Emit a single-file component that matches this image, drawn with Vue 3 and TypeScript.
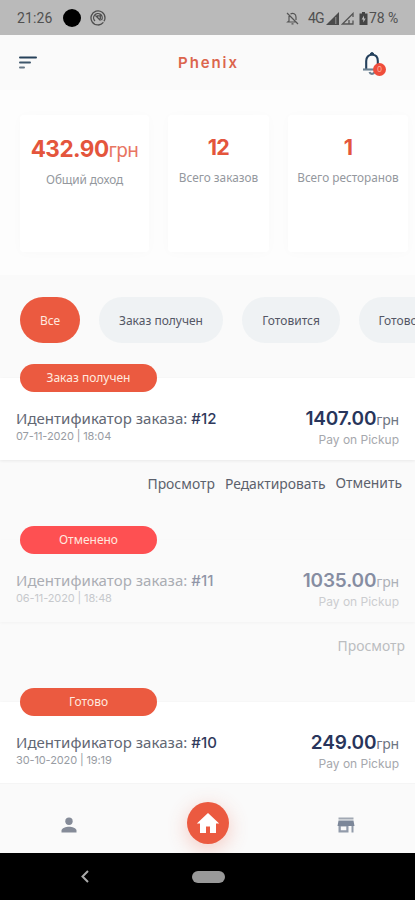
<script setup lang="ts">
interface Stat {
  value: string
  unit: string
  label: string
  size: string
}

interface Order {
  id: string
  date: string
  status: string
  amount: string
  actions: string[]
  cancelled: boolean
}

const stats: Stat[] = [
  { value: '432.90', unit: 'грн', label: 'Общий доход', size: 'wide' },
  { value: '12', unit: '', label: 'Всего заказов', size: 'small' },
  { value: '1', unit: '', label: 'Всего ресторанов', size: 'medium' },
]

const filters: string[] = ['Все', 'Заказ получен', 'Готовится', 'Готово']

const orders: Order[] = [
  { id: '#12', date: '07-11-2020 | 18:04', status: 'Заказ получен', amount: '1407.00', actions: ['Просмотр', 'Редактировать', 'Отменить'], cancelled: false },
  { id: '#11', date: '06-11-2020 | 18:48', status: 'Отменено', amount: '1035.00', actions: ['Просмотр'], cancelled: true },
  { id: '#10', date: '30-10-2020 | 19:19', status: 'Готово', amount: '249.00', actions: [], cancelled: false },
]
</script>

<template>
  <div class="phone">
    <div class="status">
      <span class="clock">21:26</span>
      <span class="dot"></span>
      <svg class="at" width="16" height="16" viewBox="0 0 16 16" fill="none" stroke="#4e4e4e" stroke-width="1.3">
        <path d="M13.4 12.4A7 7 0 1 1 15 8c0 1.500-.3 2.600-1.200 3.300M10.500 14.300A7 7 0 0 1 8 15" />
        <path d="M5 11a4.300 4.300 0 1 1 6.500-.8M5.500 5.500l5 5M7 5.800h3.300v3.400" />
      </svg>
      <span class="grow"></span>
      <svg class="mute" width="13" height="14" viewBox="0 0 13 14" fill="none" stroke="#555" stroke-width="1.200">
        <path d="M1 2l11 11M3 5v5L1.800 11h8M4.500 3C7 1.500 10 3 10 6v3M5.500 12.800h2" />
      </svg>
      <span class="net">4G</span>
      <svg class="sig" width="13" height="13" viewBox="0 0 13 13"><path d="M13 0v13H0z" fill="#4b4b4b" /><path d="M9.800 5v7" stroke="#aaa" stroke-width=".8" /></svg>
      <svg class="sig2" width="13" height="13" viewBox="0 0 13 13" fill="none" stroke="#555" stroke-width="1.300"><path d="M12 8.500V12H1.500L12 1.500V5M8 12V8" /></svg>
      <svg class="batt" width="9" height="13" viewBox="0 0 9 13"><path d="M3 0h3v1.500h2.500V13H.5V1.500H3z" fill="#444" /><path d="M5 3.500L2.600 7.500h1.700v3L6.700 6.500H5z" fill="#bababa" /></svg>
      <span class="pct">78 %</span>
    </div>

    <header class="header">
      <svg class="menu" width="18" height="13" viewBox="0 0 18 13" fill="none" stroke-width="2" stroke-linecap="round">
        <path d="M1 1.500h16" stroke="#26415a" /><path d="M1 6.500h10" stroke="#3e566b" /><path d="M1 11.500h4" stroke="#667786" />
      </svg>
      <h1>Phenix</h1>
      <div class="bell">
        <svg width="22" height="24" viewBox="0 0 22 24" fill="none" stroke="#24405c" stroke-width="2.100">
          <path d="M4.200 18V10C4.200 6.200 6.400 3.800 10 3.800s5.800 2.400 5.800 6.200v8" />
          <path d="M8.300 3.300a1.700 1.700 0 0 1 3.400 0z" fill="#24405c" stroke-width="1" />
          <path d="M1 18.500h17" stroke="#6c8192" /><path d="M7.500 21a2.600 2.600 0 0 0 5 0" stroke="#6c8192" />
        </svg>
        <span class="count">0</span>
      </div>
    </header>

    <section class="stats">
      <div v-for="s in stats" :key="s.label" class="stat" :class="s.size">
        <div class="value">{{ s.value }}<span v-if="s.unit">{{ s.unit }}</span></div>
        <div class="label">{{ s.label }}</div>
      </div>
    </section>

    <nav class="filters">
      <button v-for="(f, i) in filters" :key="f" :class="['pill', 'pill' + i]">{{ f }}</button>
    </nav>

    <main class="orders">
      <article v-for="o in orders" :key="o.id" class="order" :class="{ cancelled: o.cancelled }">
        <div class="badge">{{ o.status }}</div>
        <div class="card">
          <div class="info">
            <div class="title">Идентификатор заказа: <b>{{ o.id }}</b></div>
            <div class="date">{{ o.date }}</div>
          </div>
          <div class="sum">
            <div class="amount">{{ o.amount }}<span>грн</span></div>
            <div class="pay">Pay on Pickup</div>
          </div>
        </div>
        <div class="actions"><a v-for="a in o.actions" :key="a" :class="{ last: a === 'Отменить' }">{{ a }}</a></div>
      </article>
    </main>

    <footer class="tabs">
      <svg class="user" width="16" height="16" viewBox="0 0 16 16" fill="#858b98"><circle cx="8" cy="4.200" r="3.700" /><path d="M.5 15.500v-1.800C.5 11 5 9.800 8 9.800s7.500 1.200 7.500 3.900v1.800z" /></svg>
      <span class="home"><svg width="24" height="22" viewBox="0 0 24 22"><path d="M12 1L.8 11.500H4V21h6v-6.500h4V21h6v-9.500h3.200z" fill="#fff" /></svg></span>
      <svg class="shop" width="18" height="16" viewBox="0 0 18 16"><path d="M1.500.5h15v2h-15z" fill="#a1a8b3" /><path d="M1.500 3.500h15L17.500 9H.5z" fill="#7c8799" /><path d="M1.500 9h10v6.500h-10zM3.800 9.500v3.800h5.500V9.500zM14.500 9h2v6.500h-2z" fill="#929baa" fill-rule="evenodd" /></svg>
    </footer>

    <div class="system">
      <svg width="8" height="13" viewBox="0 0 8 13" fill="none" stroke="#aaa" stroke-width="2"><path d="M7 1L1.500 6.500 7 12" /></svg>
      <span class="handle"></span>
    </div>
  </div>
</template>

<style>
body { margin: 0; overflow: hidden; }
</style>

<style scoped>
* { box-sizing: border-box; }
.phone { width: 415px; height: 900px; display: flex; flex-direction: column; overflow: hidden; background: #fafafa; font-family: "Noto Sans", sans-serif; white-space: nowrap; }
.status { height: 35px; flex: none; background: #bababa; display: flex; align-items: center; padding: 1px 16px 0 17px; font: 14px Roboto, sans-serif; color: #505050; }
.clock { width: 46px; letter-spacing: .1px; }
.dot { width: 18px; height: 18px; border-radius: 50%; background: #000; }
.at { margin-left: 9px; }
.grow { flex: 1; }
.mute { margin-right: 9px; }
.net { width: 18px; letter-spacing: -.8px; }
.sig2 { margin-left: 2px; }
.batt { margin-left: 5px; }
.pct { width: 30px; margin-left: 1px; letter-spacing: -.1px; }
.header { height: 55px; flex: none; display: flex; align-items: center; justify-content: space-between; padding: 0 29px 0 19px; }
h1 { margin: 0 0 0 18px; font: 600 15px Inter, sans-serif; letter-spacing: 1.9px; color: #dc654d; }
.bell { position: relative; height: 24px; width: 22px; margin-right: 2px; }
.count { position: absolute; left: 11px; top: 12px; width: 13px; height: 13px; border-radius: 50%; background: #ef4d3b; color: #ffaf9d; font: 8px/13px Inter, sans-serif; text-align: center; }
.stats { height: 185px; flex: none; display: flex; gap: 19px; padding: 25px 0 23px 20px; background: #fdfdfd; }
.stat { flex: none; background: #fff; border-radius: 4px; text-align: center; box-shadow: 0 1px 12px rgba(0, 0, 0, .02); padding-top: 19px; display: flex; flex-direction: column; align-items: center; }
.wide { width: 129px; }
.small { width: 101px; }
.medium { width: 120px; }
.value { height: 30px; font: 700 21.500px/27px Inter, sans-serif; letter-spacing: -.6px; color: #e4553c; }
.wide .value { font-size: 22.500px; line-height: 29px; letter-spacing: -.5px; }
.value span { font: 400 19px/28px "Noto Sans", sans-serif; letter-spacing: -.6px; margin-left: 0; color: #e87562; }
.label { font-size: 11.800px; line-height: 26px; color: #94989e; }
.wide .label { margin-top: 2px; letter-spacing: -.1px; }
.filters { height: 89px; flex: none; display: flex; gap: 19px; padding: 22px 0 0 20px; }
.pill { height: 46px; flex: none; border: 0; border-radius: 23px; background: #eff2f4; color: #545765; font: 12px "Noto Sans", sans-serif; padding: 1px 0 0; }
.pill0 { width: 60px; background: #eb5a40; color: #ffe8df; }
.pill1 { width: 124px; }
.pill2 { width: 98px; }
.pill3 { width: 78px; }
.orders { height: 419px; flex: none; overflow: hidden; }
.order { height: 162px; }
.badge { position: relative; width: 137px; height: 28px; margin-left: 20px; border-radius: 14px; background: #eb5a40; color: #ffe8df; font-size: 12px; line-height: 27px; text-align: center; }
.card { height: 82px; margin-top: -14px; background: #fff; box-shadow: 0 1px 3px rgba(0, 0, 0, .07); display: flex; justify-content: space-between; padding: 28px 16px 0; }
.title { font-size: 15px; line-height: 24px; color: #626773; letter-spacing: .04px; }
.title b { font: 500 15px Inter, sans-serif; color: #303a5c; letter-spacing: 0; }
.date { font: 11px/13px Inter, sans-serif; color: #989ca3; letter-spacing: -.12px; }
.sum { text-align: right; padding-top: 1px; }
.amount { font: 600 19px/24px Inter, sans-serif; color: #28355b; letter-spacing: -.15px; }
.amount span { font: 14px "Noto Sans", sans-serif; color: #6e7582; letter-spacing: -.2px; }
.pay { font: 12px/17px Inter, sans-serif; color: #a6a8ad; }
.actions { height: 66px; display: flex; justify-content: flex-end; gap: 10px; padding: 13px 13px 0 0; font-size: 13.900px; line-height: 22px; color: #5c616c; }
.actions .last { margin-top: -1px; }
.cancelled .badge { background: #fe5052; }
.cancelled .card { background: #fafafa; box-shadow: 0 1px 3px rgba(0, 0, 0, .035); }
.cancelled .info { opacity: .52; }
.cancelled .sum { opacity: .55; }
.cancelled .actions { color: #bbbdc0; padding-right: 10px; }
.tabs { height: 70px; flex: none; display: flex; align-items: center; justify-content: space-between; padding: 12px 60px 0 61px; background: #fafafa; border-top: 1px solid #f5f5f5; overflow: hidden; }
.home { width: 42px; height: 42px; border-radius: 50%; background: #eb5a40; display: flex; align-items: center; justify-content: center; box-shadow: 0 5px 20px rgba(235, 90, 64, .3); margin: -4px 0 0 2px; }
.system { height: 47px; flex: none; background: #000; display: flex; align-items: center; padding-left: 81px; }
.handle { width: 33px; height: 12px; border-radius: 6px; background: #999; margin-left: 103px; }
</style>
